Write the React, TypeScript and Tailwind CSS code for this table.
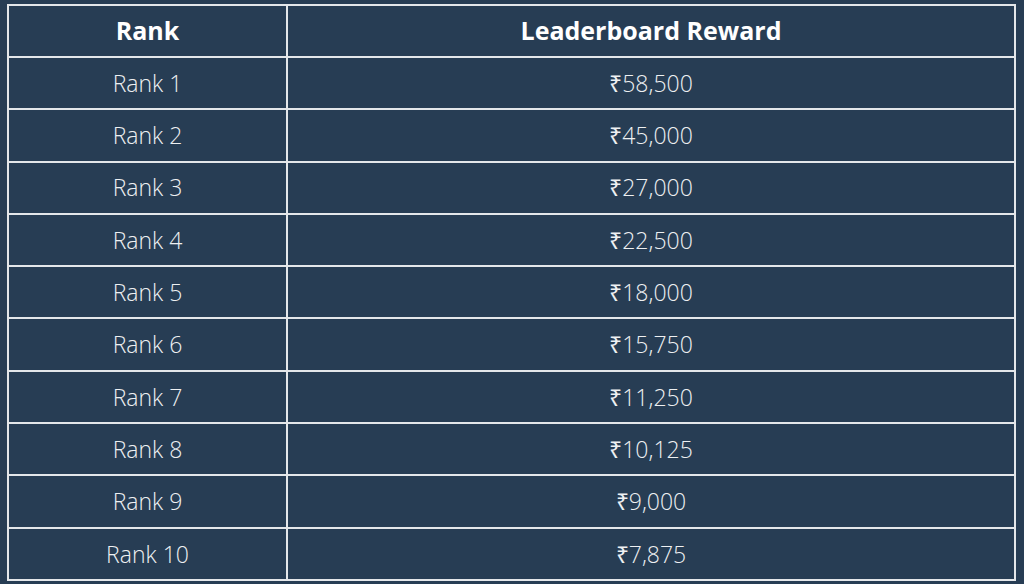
const rows = [
    ["Rank 1", "₹58,500"],
    ["Rank 2", "₹45,000"],
    ["Rank 3", "₹27,000"],
    ["Rank 4", "₹22,500"],
    ["Rank 5", "₹18,000"],
    ["Rank 6", "₹15,750"],
    ["Rank 7", "₹11,250"],
    ["Rank 8", "₹10,125"],
    ["Rank 9", "₹9,000"],
    ["Rank 10", "₹7,875"],
]

export default function App() {
    return (
        <div className="w-[1024px] h-[584px] bg-[#273d54] pt-[4px] pl-[7px] font-['Open_Sans',sans-serif] overflow-hidden">
            <table className="w-[1009px] h-[577px] border-collapse border-2 border-[#e4e7ea] text-center table-fixed">
                <thead>
                    <tr className="h-[52px]">
                        <th className="w-[279px] border-2 border-[#e4e7ea] text-[25px] font-bold text-white">Rank</th>
                        <th className="border-2 border-[#e4e7ea] text-[25px] font-bold text-white">Leaderboard Reward</th>
                    </tr>
                </thead>
                <tbody>
                    {rows.map(([rank, reward]) => (
                        <tr key={rank} className="h-[52px]">
                            <td className="border-2 border-[#e4e7ea] text-[23px] font-light text-[#eef0f2]">{rank}</td>
                            <td className="border-2 border-[#e4e7ea] text-[23px] font-light text-[#eef0f2]">{reward}</td>
                        </tr>
                    ))}
                </tbody>
            </table>
        </div>
    )
}
